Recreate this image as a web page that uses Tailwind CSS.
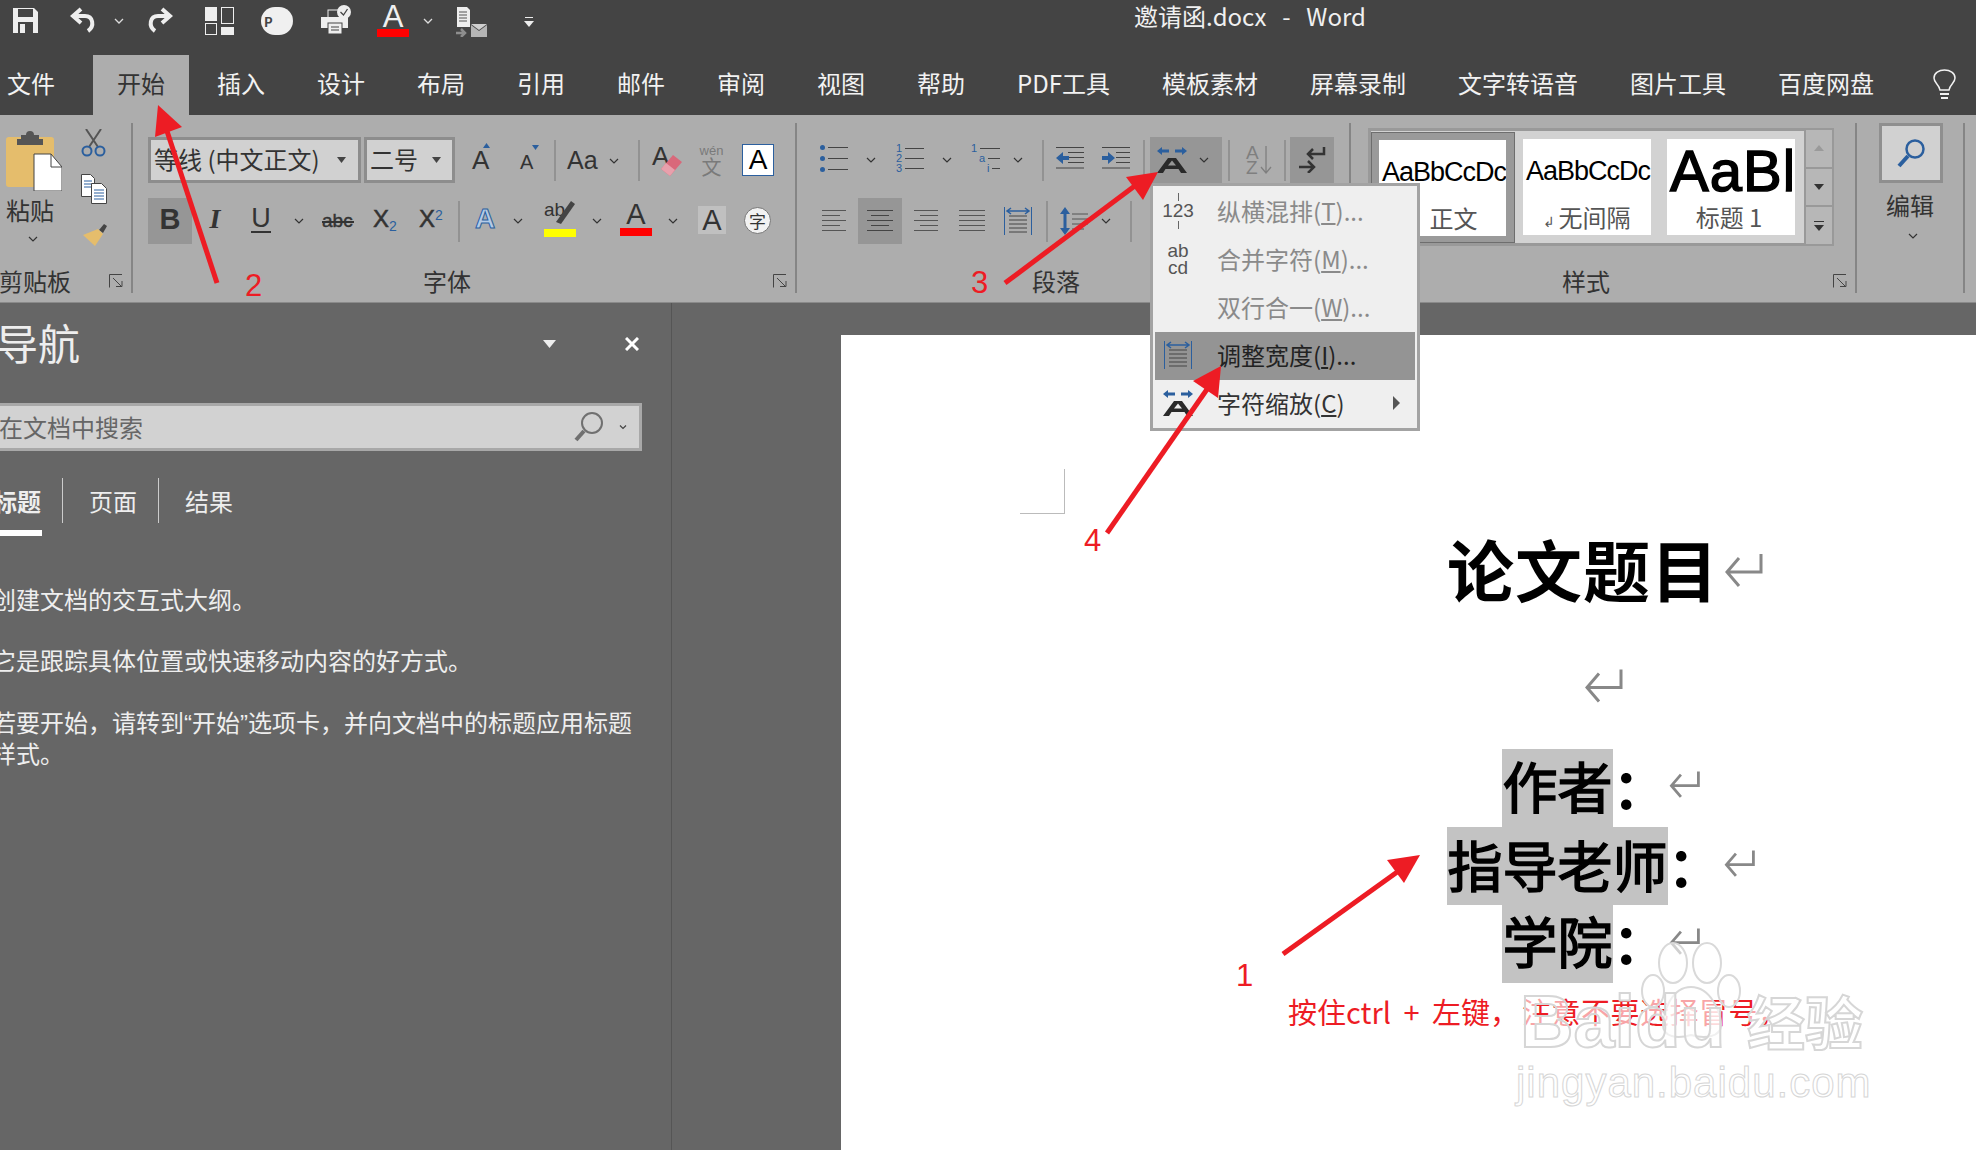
<!DOCTYPE html>
<html lang="zh-CN">
<head>
    <meta charset="UTF-8">
    <title>邀请函.docx - Word</title>
    <script src="https://cdn.jsdelivr.net/npm/@tailwindcss/browser@4"></script>
</head>
<body class="relative w-[1976px] h-[1150px] overflow-hidden bg-[#666666] font-['Noto_Sans_CJK_SC','Liberation_Sans',sans-serif] font-normal">

    <!-- title bar + quick access -->
    <div class="flex items-start h-[55px] bg-[#444444] text-[#f0f0f0]">
        <svg class="ml-[13px] mt-[8px] w-[25px] h-[25px]" viewBox="0 0 25 25"><path d="M0 0h21l4 4v21H0z" fill="#eee"/><rect x="5" y="1" width="15" height="8" fill="#444"/><rect x="5" y="14" width="15" height="11" fill="#444"/><rect x="7" y="16" width="5" height="9" fill="#eee"/></svg>
        <svg class="ml-[32px] mt-[7px] w-[27px] h-[26px]" viewBox="0 0 27 26" fill="none" stroke="#eee" stroke-width="4"><path d="M11 2 L3 9 L11 16"/><path d="M4 9 H15 C23 9 25 19 18 24"/></svg>
        <svg class="ml-[17px] mt-[18px] w-[10px] h-[6px]" viewBox="0 0 10 6" fill="none" stroke="#ddd" stroke-width="1.3"><path d="M1 1l4 4 4-4"/></svg>
        <svg class="ml-[22px] mt-[7px] w-[27px] h-[26px]" viewBox="0 0 27 26" fill="none" stroke="#eee" stroke-width="4"><path d="M16 2 L24 9 L16 16"/><path d="M23 9 H12 C4 9 2 19 9 24"/></svg>
        <svg class="ml-[32px] mt-[7px] w-[29px] h-[28px]" viewBox="0 0 29 28"><rect x="0" y="0" width="12" height="14" fill="#eee"/><rect x="16.500" y=".5" width="12" height="16" fill="none" stroke="#eee"/><rect x=".5" y="16.500" width="11" height="11" fill="none" stroke="#eee"/><rect x="16" y="20" width="13" height="8" fill="#eee"/></svg>
        <div class="ml-[27px] mt-[7px] w-[32px] h-[28px] rounded-full bg-[#f0f0f0] flex items-center pl-[3px] text-[13px] leading-none font-bold text-[#444]">P</div>
        <svg class="ml-[28px] mt-[5px] w-[30px] h-[29px]" viewBox="0 0 30 29"><rect x="7" y="5" width="14" height="8" fill="none" stroke="#eee"/><rect x="0" y="12" width="27" height="11" fill="#eee"/><rect x="7" y="18" width="14" height="11" fill="#eee" stroke="#444"/><path d="M10 22h8M10 25h8" stroke="#444"/><circle cx="23" cy="7" r="7" fill="#eee"/><path d="M19.500 7l3 3 4-6" fill="none" stroke="#444" stroke-width="1.3"/></svg>
        <div class="ml-[26px] mt-[5px] w-[32px] flex flex-col items-center">
            <span class="text-[31px] leading-[24px] font-['Liberation_Sans'] text-[#f0f0f0]">A</span>
            <span class="w-full h-[8px] bg-[#ff0000]"></span>
        </div>
        <svg class="ml-[14px] mt-[18px] w-[10px] h-[6px]" viewBox="0 0 10 6" fill="none" stroke="#ddd" stroke-width="1.3"><path d="M1 1l4 4 4-4"/></svg>
        <svg class="ml-[23px] mt-[7px] w-[31px] h-[30px]" viewBox="0 0 31 30"><path d="M1 0h10l3 3v17H1z" fill="#eee"/><path d="M3 5h8M3 8h8M3 11h8M3 14h8" stroke="#555"/><path d="M15 18l8 6 8-6v12H15z" fill="#b5b5b5"/><path d="M15 17h16l-8 6z" fill="#cfcfcf"/><path d="M0 26h8M5 22l4 4-4 4" fill="none" stroke="#8e8e8e" stroke-width="2.500"/></svg>
        <svg class="ml-[37px] mt-[17px] w-[10px] h-[10px]" viewBox="0 0 10 10"><path d="M1 0.500h8" stroke="#eee"/><path d="M0 4h10l-5 6z" fill="#eee"/></svg>
        <div class="ml-[600px] mt-[-1px] text-[24px] leading-[34px] whitespace-pre [word-spacing:2.500px]">邀请函.docx  -  Word</div>
    </div>

    <!-- tabs -->
    <div class="flex items-stretch h-[60px] bg-[#444444] text-[24px] text-[#f2f2f2] whitespace-nowrap [&>div]:pb-[5px]">
        <div class="ml-[7px] mr-[38px] flex items-center">文件</div>
        <div class="px-[24px] flex items-center bg-[#adadad] text-[#333]">开始</div>
        <div class="ml-[4px] px-[24px] flex items-center">插入</div>
        <div class="ml-[4px] px-[24px] flex items-center">设计</div>
        <div class="ml-[4px] px-[24px] flex items-center">布局</div>
        <div class="ml-[4px] px-[24px] flex items-center">引用</div>
        <div class="ml-[4px] px-[24px] flex items-center">邮件</div>
        <div class="ml-[4px] px-[24px] flex items-center">审阅</div>
        <div class="ml-[4px] px-[24px] flex items-center">视图</div>
        <div class="ml-[4px] px-[24px] flex items-center">帮助</div>
        <div class="ml-[4px] px-[24px] flex items-center">PDF工具</div>
        <div class="ml-[4px] px-[24px] flex items-center">模板素材</div>
        <div class="ml-[4px] px-[24px] flex items-center">屏幕录制</div>
        <div class="ml-[4px] px-[24px] flex items-center">文字转语音</div>
        <div class="ml-[4px] px-[24px] flex items-center">图片工具</div>
        <div class="ml-[4px] px-[24px] flex items-center">百度网盘</div>
        <svg class="ml-[35px] mt-[14px] w-[23px] h-[31px]" viewBox="0 0 23 31" fill="none" stroke="#f2f2f2" stroke-width="1.500"><path d="M7 21 C6 15 1 14 1 9 C1 4 6 1 11.500 1 C17 1 22 4 22 9 C22 14 17 15 16 21z"/><path d="M7 25h9M8 29h7" stroke-width="2"/></svg>
    </div>

    <!-- ribbon -->
    <div class="flex items-start h-[187px] bg-[#adadad] text-[#333] text-[24px] whitespace-nowrap">

        <!-- clipboard -->
        <section class="flex-none w-[133px] h-[170px] mt-[8px] border-r-2 border-[#858585] flex flex-col">
            <div class="flex">
                <div class="w-[72px] flex flex-col">
                    <svg class="ml-[6px] mt-[8px] w-[56px] h-[60px]" viewBox="0 0 56 60"><rect x="0" y="6" width="48" height="50" rx="3" fill="#e5bd6c"/><path d="M15 8 V4 H20 A4 4 0 0 1 28 4 H33 V8 H37 V14 H11 V8z" fill="#555"/><path d="M28 23 H45 L56 36 V60 H28z" fill="#fff" stroke="#444"/><path d="M45 23 V36 H56" fill="none" stroke="#444"/></svg>
                    <span class="ml-[6px] mt-[7px] leading-[24px]">粘贴</span>
                    <svg class="ml-[28px] mt-[14px] w-[10px] h-[6px]" viewBox="0 0 10 6" fill="none" stroke="#333" stroke-width="1.200"><path d="M1 1l4 4 4-4"/></svg>
                </div>
                <div class="ml-[9px] flex flex-col">
                    <svg class="mt-[6px] w-[25px] h-[28px]" viewBox="0 0 25 28" fill="none"><path d="M5 0 L17 18 M20 0 L8 18" stroke="#555" stroke-width="2"/><circle cx="6" cy="22" r="4.500" stroke="#2b5f9e" stroke-width="2"/><circle cx="19" cy="22" r="4.500" stroke="#2b5f9e" stroke-width="2"/></svg>
                    <svg class="mt-[17px] w-[26px] h-[30px]" viewBox="0 0 26 30"><path d="M.5.5h9l4 4v18H.5z" fill="#fff" stroke="#444"/><path d="M3 7h8M3 10h8M3 13h8" stroke="#2b5f9e"/><path d="M10.500 9.500h10l5 5v15h-15z" fill="#fff" stroke="#444"/><path d="M13 16h10M13 19h10M13 22h10M13 25h10" stroke="#2b5f9e"/></svg>
                    <svg class="ml-[2px] mt-[20px] w-[24px] h-[22px]" viewBox="0 0 24 22"><path d="M16 6 L21 0 L24 2 L20 9z" fill="#444"/><path d="M0 11 L15 5 L20 10 L12 22z" fill="#e5bd6c"/></svg>
                </div>
            </div>
            <div class="mt-auto flex items-center h-[24px]">
                <span class="leading-[24px] ml-[-1px]">剪贴板</span>
                <svg class="ml-auto mr-[8px] w-[14px] h-[14px]" viewBox="0 0 14 14" fill="none" stroke="#444"><path d="M.5 13.500V.5H13"/><path d="M4 4l8 8M7 12.500h6V7"/></svg>
            </div>
        </section>

        <!-- font -->
        <section class="flex-none w-[664px] h-[170px] mt-[8px] border-r-2 border-[#858585] flex flex-col">
            <div class="mt-[14px] ml-[15px] flex items-center h-[46px]">
                <div class="w-[213px] h-[46px] border-[3px] border-[#8d8d8d] bg-[#d1d1d1] flex items-center pl-[3px]">
                    <span class="pb-[2px]">等线 (中文正文)</span>
                    <svg class="ml-auto mr-[12px] w-[9px] h-[6px]" viewBox="0 0 9 6"><path d="M0 0h9L4.500 6z" fill="#444"/></svg>
                </div>
                <div class="ml-[3px] w-[91px] h-[46px] border-[3px] border-[#8d8d8d] bg-[#d1d1d1] flex items-center pl-[3px]">
                    <span class="pb-[2px]">二号</span>
                    <svg class="ml-auto mr-[11px] w-[9px] h-[6px]" viewBox="0 0 9 6"><path d="M0 0h9L4.500 6z" fill="#444"/></svg>
                </div>
                <div class="relative ml-[17px] w-[16px] text-[26px] leading-[28px] font-['Liberation_Sans']">A
                    <svg class="absolute right-[-2px] top-[-3px] w-[7px] h-[5px]" viewBox="0 0 7 5"><path d="M0 5h7L3.500 0z" fill="#2b5f9e"/></svg>
                </div>
                <div class="relative ml-[32px] w-[14px] mt-[3px] text-[20px] leading-[24px] font-['Liberation_Sans']">A
                    <svg class="absolute right-[-5px] top-[-5px] w-[7px] h-[5px]" viewBox="0 0 7 5"><path d="M0 0h7L3.500 5z" fill="#2b5f9e"/></svg>
                </div>
                <span class="ml-[20px] w-[2px] h-[41px] bg-[#929292]"></span>
                <span class="ml-[11px] w-[30px] text-[25px] font-['Liberation_Sans'] leading-none">Aa</span>
                <svg class="ml-[12px] mt-[2px] w-[10px] h-[6px]" viewBox="0 0 10 6" fill="none" stroke="#333" stroke-width="1.200"><path d="M1 1l4 4 4-4"/></svg>
                <span class="ml-[19px] w-[2px] h-[41px] bg-[#929292]"></span>
                <div class="relative ml-[12px] w-[29px] h-[30px] text-[26px] leading-[22px] font-['Liberation_Sans']">A
                    <svg class="absolute left-[6px] top-[10px] w-[24px] h-[21px]" viewBox="0 0 24 21"><path d="M15 0 L24 7 L12 21 L3 14z" fill="#d9687a"/><path d="M3 14 L8 8 L17 15 L12 21z" fill="#e8a0ac"/></svg>
                </div>
                <div class="ml-[18px] w-[25px] flex flex-col items-center text-[#7a7a7a]">
                    <span class="text-[13px] leading-[14px] font-['Liberation_Sans']">wén</span>
                    <span class="text-[20px] leading-[18px]">文</span>
                </div>
                <div class="ml-[18px] w-[32px] h-[32px] bg-white border border-[#2b5f9e] flex items-center justify-center text-[28px] leading-none text-black font-['Liberation_Sans']">A</div>
            </div>
            <div class="mt-[15px] ml-[15px] flex items-center h-[46px] font-['Liberation_Sans']">
                <div class="w-[44px] h-[46px] bg-[#969696] flex items-center justify-center pb-[4px] text-[29px] font-bold leading-none">B</div>
                <span class="ml-[13px] mb-[4px] w-[20px] text-center text-[28px] italic font-bold font-['Liberation_Serif'] leading-none">I</span>
                <span class="ml-[26px] mb-[4px] w-[20px] text-center text-[27px] leading-[25px] border-b-2 border-[#333]">U</span>
                <svg class="ml-[23px] w-[10px] h-[6px]" viewBox="0 0 10 6" fill="none" stroke="#333" stroke-width="1.200"><path d="M1 1l4 4 4-4"/></svg>
                <span class="relative ml-[18px] mb-[2px] w-[32px] text-[19px] leading-none [-webkit-text-stroke:0.4px_#333]">abc<i class="absolute left-0 right-0 top-[10px] h-[2px] bg-[#333]"></i></span>
                <span class="ml-[19px] mb-[4px] w-[25px] text-[24px] leading-none [-webkit-text-stroke:0.5px_#333]">X<sub class="text-[14px] text-[#2b5f9e] [-webkit-text-stroke:0]">2</sub></span>
                <span class="ml-[21px] mb-[4px] w-[24px] text-[24px] leading-none [-webkit-text-stroke:0.5px_#333]">X<sup class="text-[14px] text-[#2b5f9e] [-webkit-text-stroke:0]">2</sup></span>
                <span class="ml-[15px] w-[2px] h-[41px] bg-[#929292]"></span>
                <span class="ml-[15px] mb-[4px] w-[20px] text-[28px] leading-none font-bold text-[#b4cbe6] [-webkit-text-stroke:1px_#2b5f9e]">A</span>
                <svg class="ml-[18px] w-[10px] h-[6px]" viewBox="0 0 10 6" fill="none" stroke="#333" stroke-width="1.200"><path d="M1 1l4 4 4-4"/></svg>
                <div class="relative ml-[21px] mb-[6px] w-[32px] h-[36px] text-[19px] leading-[20px]">ab
                    <svg class="absolute left-[6px] top-[0px] w-[26px] h-[26px]" viewBox="0 0 26 26"><path d="M21 1 L25 4 L11 24 L6 22z" fill="#444"/></svg>
                    <span class="absolute left-0 right-0 bottom-[-1px] h-[8px] bg-[#ffff00]"></span>
                </div>
                <svg class="ml-[16px] w-[10px] h-[6px]" viewBox="0 0 10 6" fill="none" stroke="#333" stroke-width="1.200"><path d="M1 1l4 4 4-4"/></svg>
                <div class="ml-[18px] mb-[6px] w-[32px] h-[36px] flex flex-col items-center">
                    <span class="text-[29px] leading-[28px]">A</span>
                    <span class="w-full h-[8px] bg-[#ff0000]"></span>
                </div>
                <svg class="ml-[16px] w-[10px] h-[6px]" viewBox="0 0 10 6" fill="none" stroke="#333" stroke-width="1.200"><path d="M1 1l4 4 4-4"/></svg>
                <div class="ml-[20px] mb-[2px] w-[28px] h-[28px] bg-[#c0c0c0] flex items-center justify-center text-[29px] leading-none">A</div>
                <div class="ml-[18px] mb-[2px] w-[27px] h-[27px] rounded-full bg-[#f2f2f2] border border-[#777] flex items-center justify-center text-[17px] leading-none font-['Noto_Sans_CJK_SC']">字</div>
            </div>
            <div class="mt-auto flex items-center h-[24px]">
                <span class="ml-[290px] leading-[24px]">字体</span>
                <svg class="ml-auto mr-[8px] w-[14px] h-[14px]" viewBox="0 0 14 14" fill="none" stroke="#444"><path d="M.5 13.500V.5H13"/><path d="M4 4l8 8M7 12.500h6V7"/></svg>
            </div>
        </section>

        <!-- paragraph -->
        <section class="flex-none w-[554px] h-[170px] mt-[8px] border-r-2 border-[#858585] flex flex-col">
            <div class="mt-[14px] flex items-center h-[46px]">
                <svg class="ml-[23px] mb-[4px] w-[28px] h-[27px]" viewBox="0 0 28 27"><g fill="#2b5f9e"><circle cx="2.500" cy="2.500" r="2.500"/><circle cx="2.500" cy="13.500" r="2.500"/><circle cx="2.500" cy="24.500" r="2.500"/></g><path d="M8 2.500h20M8 13.500h20M8 24.500h20" stroke="#444"/></svg>
                <svg class="ml-[18px] w-[10px] h-[6px]" viewBox="0 0 10 6" fill="none" stroke="#333" stroke-width="1.200"><path d="M1 1l4 4 4-4"/></svg>
                <div class="ml-[20px] mb-[4px] w-[28px] h-[30px] flex flex-col text-[11px] leading-[10px] text-[#2b5f9e] font-['Liberation_Sans']">
                    <span class="flex items-center gap-[3px] h-[10px]">1<i class="flex-1 h-px bg-[#444]"></i></span>
                    <span class="flex items-center gap-[3px] h-[10px]">2<i class="flex-1 h-px bg-[#444]"></i></span>
                    <span class="flex items-center gap-[3px] h-[10px]">3<i class="flex-1 h-px bg-[#444]"></i></span>
                </div>
                <svg class="ml-[18px] w-[10px] h-[6px]" viewBox="0 0 10 6" fill="none" stroke="#333" stroke-width="1.200"><path d="M1 1l4 4 4-4"/></svg>
                <div class="ml-[19px] mb-[4px] w-[29px] h-[30px] flex flex-col text-[11px] leading-[10px] text-[#2b5f9e] font-['Liberation_Sans']">
                    <span class="flex items-center gap-[3px] h-[10px]">1<i class="flex-1 h-px bg-[#444]"></i></span>
                    <span class="flex items-center gap-[3px] h-[10px] pl-[8px]">a<i class="flex-1 h-px bg-[#444]"></i></span>
                    <span class="flex items-center gap-[3px] h-[10px] pl-[16px]">i<i class="flex-1 h-px bg-[#444]"></i></span>
                </div>
                <svg class="ml-[13px] w-[10px] h-[6px]" viewBox="0 0 10 6" fill="none" stroke="#333" stroke-width="1.200"><path d="M1 1l4 4 4-4"/></svg>
                <span class="ml-[19px] w-[2px] h-[41px] bg-[#929292]"></span>
                <svg class="ml-[12px] mb-[4px] w-[28px] h-[22px]" viewBox="0 0 28 22"><path d="M0 .5h28M12 5.500h16M12 10.500h16M12 15.500h16M0 21h28" stroke="#444"/><path d="M0 11 L7 5 V9 H13 V13 H7 V17z" fill="#2b5f9e"/></svg>
                <svg class="ml-[18px] mb-[4px] w-[28px] h-[22px]" viewBox="0 0 28 22"><path d="M0 .5h28M14 5.500h14M14 10.500h14M14 15.500h14M0 21h28" stroke="#444"/><path d="M13 11 L6 5 V9 H0 V13 H6 V17z" fill="#2b5f9e"/></svg>
                <span class="ml-[13px] w-[2px] h-[41px] bg-[#929292]"></span>
                <div class="ml-[5px] w-[72px] h-[46px] bg-[#969696] flex items-center">
                    <svg class="ml-[7px] w-[30px] h-[26px]" viewBox="0 0 30 26"><path d="M0 4 L5 0 V2.500 H12 V5.500 H5 V8z M30 4 L25 0 V2.500 H18 V5.500 H25 V8z" fill="#2b5f9e"/><path d="M0 26 L11 11 H19 L30 26 H24 L21.500 22 H8.500 L6 26z M11 18.500 H19 L15 13.500z" fill="#2a2a2a" fill-rule="evenodd"/></svg>
                    <svg class="ml-[12px] w-[10px] h-[6px]" viewBox="0 0 10 6" fill="none" stroke="#333" stroke-width="1.200"><path d="M1 1l4 4 4-4"/></svg>
                </div>
                <span class="ml-[6px] w-[2px] h-[41px] bg-[#929292]"></span>
                <div class="ml-[16px] w-[26px] h-[30px] flex items-center text-[#7f7f7f] font-['Liberation_Sans']">
                    <span class="text-[19px] leading-[15px] w-[14px]">A<br>Z</span>
                    <svg class="w-[12px] h-[28px]" viewBox="0 0 12 28" fill="none" stroke="#7f7f7f" stroke-width="1.300"><path d="M6 0v26M1 21l5 6 5-6"/></svg>
                </div>
                <span class="ml-[12px] w-[2px] h-[41px] bg-[#929292]"></span>
                <div class="ml-[4px] w-[44px] h-[46px] bg-[#969696] flex items-center justify-center">
                    <svg class="w-[28px] h-[26px]" viewBox="0 0 28 26" fill="none" stroke="#333" stroke-width="2.500"><path d="M26 0v7H11M15 2l-5 5 5 5"/><path d="M1 20h14M10 14l6 6-6 6" stroke-width="2.500"/></svg>
                </div>
            </div>
            <div class="mt-[15px] flex items-center h-[46px]">
                <svg class="ml-[25px] w-[24px] h-[22px]" viewBox="0 0 24 22" stroke="#555"><path d="M0 .5h24M0 5.500h18M0 10.500h24M0 15.500h18M0 20.500h24"/></svg>
                <div class="ml-[12px] w-[44px] h-[46px] bg-[#969696] flex items-center justify-center">
                    <svg class="w-[26px] h-[22px]" viewBox="0 0 26 22" stroke="#444"><path d="M0 .5h26M4 5.500h18M0 10.500h26M4 15.500h18M0 20.500h26"/></svg>
                </div>
                <svg class="ml-[12px] w-[24px] h-[22px]" viewBox="0 0 24 22" stroke="#555"><path d="M0 .5h24M6 5.500h18M0 10.500h24M6 15.500h18M0 20.500h24"/></svg>
                <svg class="ml-[21px] w-[26px] h-[22px]" viewBox="0 0 26 22" stroke="#555"><path d="M0 .5h26M0 5.500h26M0 10.500h26M0 15.500h26M0 20.500h26"/></svg>
                <svg class="ml-[19px] w-[28px] h-[28px]" viewBox="0 0 28 28" fill="none"><path d="M5 9h18M5 13h18M5 17h18M5 21h18M5 25h18" stroke="#444"/><path d="M.5 0v28M27.500 0v28" stroke="#2b5f9e"/><path d="M3 4h22M7 1 L3 4 L7 7M21 1 L25 4 L21 7" stroke="#2b5f9e" stroke-width="1.500"/></svg>
                <span class="ml-[14px] w-[2px] h-[41px] bg-[#929292]"></span>
                <svg class="ml-[12px] w-[28px] h-[28px]" viewBox="0 0 28 28"><path d="M12 7h16M12 12h16M12 17h16M12 22h12" stroke="#555"/><path d="M5 0 L10 7 H6.500 V21 H10 L5 28 L0 21 H3.500 V7 H0z" fill="#2b5f9e"/></svg>
                <svg class="ml-[13px] w-[10px] h-[6px]" viewBox="0 0 10 6" fill="none" stroke="#333" stroke-width="1.200"><path d="M1 1l4 4 4-4"/></svg>
                <span class="ml-[19px] w-[2px] h-[41px] bg-[#929292]"></span>
            </div>
            <div class="mt-auto flex items-center h-[24px]">
                <span class="ml-[235px] leading-[24px]">段落</span>
            </div>
        </section>

        <!-- styles -->
        <section class="flex-none w-[506px] h-[170px] mt-[8px] border-r-2 border-[#858585] flex flex-col">
            <div class="mt-[5px] ml-[17px] flex">
                <div class="w-[436px] h-[118px] border-[3px] border-r-0 border-[#999999] bg-[#d2d2d2] flex items-start">
                    <div class="w-[144px] h-[111px] bg-[#9a9a9a] border border-[#6e6e6e] pt-[7px] px-[7px] mt-px">
                        <div class="w-[127px] h-[96px] bg-white overflow-hidden flex flex-col">
                            <div class="h-[64px] pl-[3px] flex items-center text-[27px] text-black font-['Liberation_Sans'] tracking-[-1px]">AaBbCcDc</div>
                            <div class="pl-[22px] text-center text-[#555] leading-[28px]">正文</div>
                        </div>
                    </div>
                    <div class="ml-[8px] mt-[8px] w-[128px] h-[96px] bg-white overflow-hidden flex flex-col">
                        <div class="h-[64px] pl-[3px] flex items-center text-[27px] text-black font-['Liberation_Sans'] tracking-[-1px]">AaBbCcDc</div>
                        <div class="text-center text-[#555] leading-[28px]"><span class="text-[14px]">↲ </span>无间隔</div>
                    </div>
                    <div class="ml-[16px] mt-[8px] w-[128px] h-[96px] bg-white overflow-hidden flex flex-col">
                        <div class="h-[64px] pl-[3px] flex items-center text-[58px] leading-none tracking-[1px] [-webkit-text-stroke:1.500px_#000] text-black font-['Liberation_Sans'] overflow-hidden w-[125px]">AaBb</div>
                        <div class="pr-[4px] text-center text-[#555] leading-[28px]">标题 1</div>
                    </div>
                </div>
                <div class="w-[30px] h-[118px] flex flex-col bg-[#b7b7b7] border-2 border-[#999999]">
                    <div class="flex-1 flex items-center justify-center border-b-2 border-[#999999]"><svg class="w-[10px] h-[6px]" viewBox="0 0 10 6"><path d="M0 6h10L5 0z" fill="#9a9a9a"/></svg></div>
                    <div class="flex-1 flex items-center justify-center border-b-2 border-[#999999]"><svg class="w-[10px] h-[6px]" viewBox="0 0 10 6"><path d="M0 0h10L5 6z" fill="#333"/></svg></div>
                    <div class="flex-1 flex items-center justify-center"><svg class="w-[10px] h-[10px]" viewBox="0 0 10 10"><path d="M0 .5h10" stroke="#333"/><path d="M0 4h10L5 10z" fill="#333"/></svg></div>
                </div>
            </div>
            <div class="mt-auto flex items-center h-[24px]">
                <span class="ml-[211px] leading-[24px]">样式</span>
                <svg class="ml-auto mr-[8px] w-[14px] h-[14px]" viewBox="0 0 14 14" fill="none" stroke="#444"><path d="M.5 13.500V.5H13"/><path d="M4 4l8 8M7 12.500h6V7"/></svg>
            </div>
        </section>

        <!-- editing -->
        <section class="flex-none w-[108px] h-[170px] mt-[8px] border-r-2 border-[#858585] flex flex-col">
            <div class="ml-[22px] w-[64px] h-[60px] border-[3px] border-[#8f8f8f] bg-[#d1d1d1] flex items-center justify-center">
                <svg class="w-[28px] h-[30px]" viewBox="0 0 28 30" fill="none" stroke="#2b5f9e"><circle cx="18" cy="11" r="8.500" stroke-width="2.500"/><path d="M11 18 L2 28" stroke-width="4"/></svg>
            </div>
            <span class="ml-[29px] mt-[8px] leading-[28px]">编辑</span>
            <svg class="ml-[51px] mt-[14px] w-[10px] h-[6px]" viewBox="0 0 10 6" fill="none" stroke="#333" stroke-width="1.200"><path d="M1 1l4 4 4-4"/></svg>
        </section>
    </div>

    <!-- body: navigation pane + page -->
    <div class="flex h-[848px] border-t border-[#8a8a8a]">
        <aside class="flex-none w-[672px] border-r border-[#555555] text-[#eeeeee] overflow-hidden">
            <div class="flex items-center h-[77px]">
                <span class="ml-[-4px] text-[42px] leading-none">导航</span>
                <svg class="ml-[463px] mt-[4px] w-[13px] h-[8px]" viewBox="0 0 13 8"><path d="M0 0h13L6.500 8z" fill="#eee"/></svg>
                <svg class="ml-[69px] mt-[4px] w-[14px] h-[14px]" viewBox="0 0 14 14" stroke="#fff" stroke-width="3"><path d="M1 1l12 12M13 1L1 13"/></svg>
            </div>
            <div class="mt-[23px] w-[642px] h-[48px] bg-[#d2d2d2] border-[3px] border-l-0 border-[#a8a8a8] flex items-center text-[24px] text-[#666]">
                <span class="ml-[-1px]">在文档中搜索</span>
                <svg class="ml-[431px] w-[30px] h-[30px]" viewBox="0 0 30 30" fill="none" stroke="#707070"><circle cx="18" cy="11" r="10" stroke-width="2"/><path d="M10 19 L2 28" stroke-width="4"/></svg>
                <svg class="ml-[15px] w-[8px] h-[5px]" viewBox="0 0 8 5" fill="none" stroke="#444" stroke-width="1.200"><path d="M1 .5l3 3 3-3"/></svg>
            </div>
            <div class="mt-[27px] flex items-center h-[45px] text-[24px]">
                <span class="ml-[-7px] w-[48px] font-bold">标题</span>
                <span class="ml-[21px] w-px h-[45px] bg-[#cccccc]"></span>
                <span class="ml-[26px]">页面</span>
                <span class="ml-[21px] w-px h-[45px] bg-[#cccccc]"></span>
                <span class="ml-[26px]">结果</span>
            </div>
            <div class="mt-[7px] w-[42px] h-[6px] bg-white"></div>
            <div class="ml-[-8px] mt-[48px] w-[660px] text-[24px] leading-[30px]">
                <p>创建文档的交互式大纲。</p>
                <p class="mt-[31px]">它是跟踪具体位置或快速移动内容的好方式。</p>
                <p class="mt-[32px] leading-[29px]">若要开始，请转到<span class="font-['Liberation_Sans']">“</span>开始<span class="font-['Liberation_Sans']">”</span>选项卡，并向文档中的标题应用标题<br>样式。</p>
            </div>
        </aside>

        <main class="ml-[169px] mt-[32px] flex-1 bg-white overflow-hidden">
            <div class="w-[1520px] flex flex-col items-center text-black font-normal">
                <div class="self-start ml-[179px] mt-[134px] w-[45px] h-[45px] border-r border-b border-[#bbbbbb]"></div>
                <div class="mt-[19px] pl-[8px] h-[78px] flex items-center">
                    <span class="text-[67px] leading-[70px] h-[78px] font-bold tracking-[1px]">论文题目</span>
                    <svg class="ml-[5px] mt-[-4px] w-[39px] h-[33px]" viewBox="0 0 39 33" fill="none" stroke="#888" stroke-width="3"><path d="M37 0v18H3M15 4L3 18l12 14"/></svg>
                </div>
                <div class="mt-[36px] pl-[5px] h-[78px] flex items-center">
                    <svg class="w-[39px] h-[34px]" viewBox="0 0 39 33" fill="none" stroke="#888" stroke-width="3"><path d="M37 0v18H3M15 4L3 18l12 14"/></svg>
                </div>
                <div class="mt-[24px] h-[78px] flex items-center">
                    <span class="inline-block h-[78px] bg-[#c3c3c3] text-[55px] leading-[70px] [-webkit-text-stroke:1.500px_#000]">作者</span>
                    <span class="inline-block h-[78px] text-[55px] leading-[72px] font-bold">：</span>
                    <svg class="ml-[1px] mb-[8px] w-[31px] h-[27px]" viewBox="0 0 39 33" fill="none" stroke="#888" stroke-width="3.500"><path d="M37 0v18H3M15 4L3 18l12 14"/></svg>
                </div>
                <div class="h-[78px] flex items-center">
                    <span class="inline-block h-[78px] bg-[#c3c3c3] text-[55px] leading-[72px] [-webkit-text-stroke:1.500px_#000]">指导老师</span>
                    <span class="inline-block h-[78px] text-[55px] leading-[72px] font-bold">：</span>
                    <svg class="ml-[1px] mb-[6px] w-[31px] h-[27px]" viewBox="0 0 39 33" fill="none" stroke="#888" stroke-width="3.500"><path d="M37 0v18H3M15 4L3 18l12 14"/></svg>
                </div>
                <div class="h-[78px] flex items-center">
                    <span class="inline-block h-[78px] bg-[#c3c3c3] text-[55px] leading-[68px] [-webkit-text-stroke:1.500px_#000]">学院</span>
                    <span class="inline-block h-[78px] text-[55px] leading-[70px] font-bold">：</span>
                    <svg class="ml-[1px] mb-[6px] w-[31px] h-[27px]" viewBox="0 0 39 33" fill="none" stroke="#888" stroke-width="3.500"><path d="M37 0v18H3M15 4L3 18l12 14"/></svg>
                </div>
            </div>
        </main>
    </div>

    <!-- dropdown menu over the ribbon -->
    <div class="absolute left-[1150px] top-[183px] w-[270px] h-[248px] bg-[#efefef] border-[3px] border-[#a3a3a3] pt-[2px] px-[2px] text-[24px] text-[#8a8a8a] whitespace-nowrap [&>div]:pb-[3px]">
        <div class="h-[48px] flex items-center">
            <div class="w-[46px] mr-[16px] flex flex-col items-center text-[#555] text-[19px] font-['Liberation_Sans'] leading-[20px]"><i class="w-px h-[8px] bg-[#666]"></i><span>123</span><i class="w-px h-[8px] bg-[#666]"></i></div>
            <span>纵横混排(<u>T</u>)...</span>
        </div>
        <div class="h-[48px] flex items-center">
            <div class="w-[46px] mr-[16px] flex flex-col items-center text-[#555] text-[19px] leading-[17px] font-['Liberation_Sans']"><span>ab</span><span>cd</span></div>
            <span>合并字符(<u>M</u>)...</span>
        </div>
        <div class="h-[48px] flex items-center pl-[62px]">双行合一(<u>W</u>)...</div>
        <div class="h-[48px] flex items-center bg-[#949494] text-[#222]">
            <div class="w-[46px] mr-[16px] flex justify-center"><svg class="w-[28px] h-[28px]" viewBox="0 0 28 28" fill="none"><path d="M5 9h18M5 13h18M5 17h18M5 21h18M5 25h18" stroke="#444"/><path d="M.5 0v28M27.500 0v28" stroke="#2b5f9e"/><path d="M3 4h22M7 1 L3 4 L7 7M21 1 L25 4 L21 7" stroke="#2b5f9e" stroke-width="1.500"/></svg></div>
            <span>调整宽度(<u>I</u>)...</span>
        </div>
        <div class="h-[48px] flex items-center text-[#333]">
            <div class="w-[46px] mr-[16px] flex justify-center"><svg class="w-[30px] h-[26px]" viewBox="0 0 30 26"><path d="M0 4 L5 0 V2.500 H12 V5.500 H5 V8z M30 4 L25 0 V2.500 H18 V5.500 H25 V8z" fill="#2b5f9e"/><path d="M0 26 L11 11 H19 L30 26 H24 L21.500 22 H8.500 L6 26z M11 18.500 H19 L15 13.500z" fill="#2a2a2a" fill-rule="evenodd"/></svg></div>
            <span>字符缩放(<u>C</u>)</span>
            <svg class="ml-auto mr-[15px] w-[7px] h-[14px]" viewBox="0 0 7 14"><path d="M0 0l7 7-7 7z" fill="#555"/></svg>
        </div>
    </div>

    <!-- red annotations, drawn on top of the screenshot -->
    <svg class="absolute left-0 top-0 w-[1976px] h-[1150px] pointer-events-none" viewBox="0 0 1976 1150">
        <g stroke="#ed1c24" stroke-width="5" fill="#ed1c24">
            <path d="M217 283 L165 125"/><path d="M158 105 L182 127 L155 137z" stroke="none"/>
            <path d="M1005 283 L1140 182"/><path d="M1158 172 L1143 200 L1126 177z" stroke="none"/>
            <path d="M1107 533 L1210 385"/><path d="M1221 366 L1218 398 L1193 381z" stroke="none"/>
            <path d="M1283 954 L1400 870"/><path d="M1420 855 L1404 883 L1387 860z" stroke="none"/>
        </g>
    </svg>
    <span class="absolute left-[245px] top-[268px] text-[31px] leading-[36px] text-[#ed1c24] font-['Liberation_Sans']">2</span>
    <span class="absolute left-[971px] top-[265px] text-[31px] leading-[36px] text-[#ed1c24] font-['Liberation_Sans']">3</span>
    <span class="absolute left-[1084px] top-[523px] text-[31px] leading-[36px] text-[#ed1c24] font-['Liberation_Sans']">4</span>
    <span class="absolute left-[1236px] top-[958px] text-[31px] leading-[36px] text-[#ed1c24] font-['Liberation_Sans']">1</span>
    <span class="absolute left-[1288px] top-[991px] text-[29px] leading-[40px] text-[#ed1c24] whitespace-pre [word-spacing:6px]">按住ctrl + 左键，<span class="ml-[3px] tracking-[0.5px]">注意不要选择冒号，</span></span>

    <!-- baidu watermark -->
    <svg class="absolute left-[1641px] top-[941px] w-[100px] h-[112px]" viewBox="0 0 100 112" fill="#ffffff" fill-opacity=".6" stroke="#d9d9d9" stroke-width="2"><ellipse cx="32" cy="22" rx="14" ry="20"/><ellipse cx="66" cy="22" rx="14" ry="20"/><ellipse cx="12" cy="50" rx="11" ry="16"/><ellipse cx="88" cy="50" rx="11" ry="16"/><path d="M50 46 C30 46 22 72 22 84 C22 96 36 98 50 94 C64 98 80 96 80 84 C80 72 70 46 50 46z"/></svg>
    <span class="absolute left-[1520px] top-[985px] text-[74px] leading-[74px] font-bold font-['Liberation_Sans'] text-white/60 [-webkit-text-stroke:2px_#d6d6d6]">Baidu</span>
    <span class="absolute left-[1747px] top-[988px] text-[58px] leading-[64px] font-bold text-white/60 [-webkit-text-stroke:2px_#d6d6d6]">经验</span>
    <span class="absolute left-[1516px] top-[1060px] text-[42px] leading-[46px] font-['Liberation_Sans'] text-white/50 tracking-[1px] [-webkit-text-stroke:1px_#d6d6d6]">jingyan.baidu.com</span>
</body>
</html>
